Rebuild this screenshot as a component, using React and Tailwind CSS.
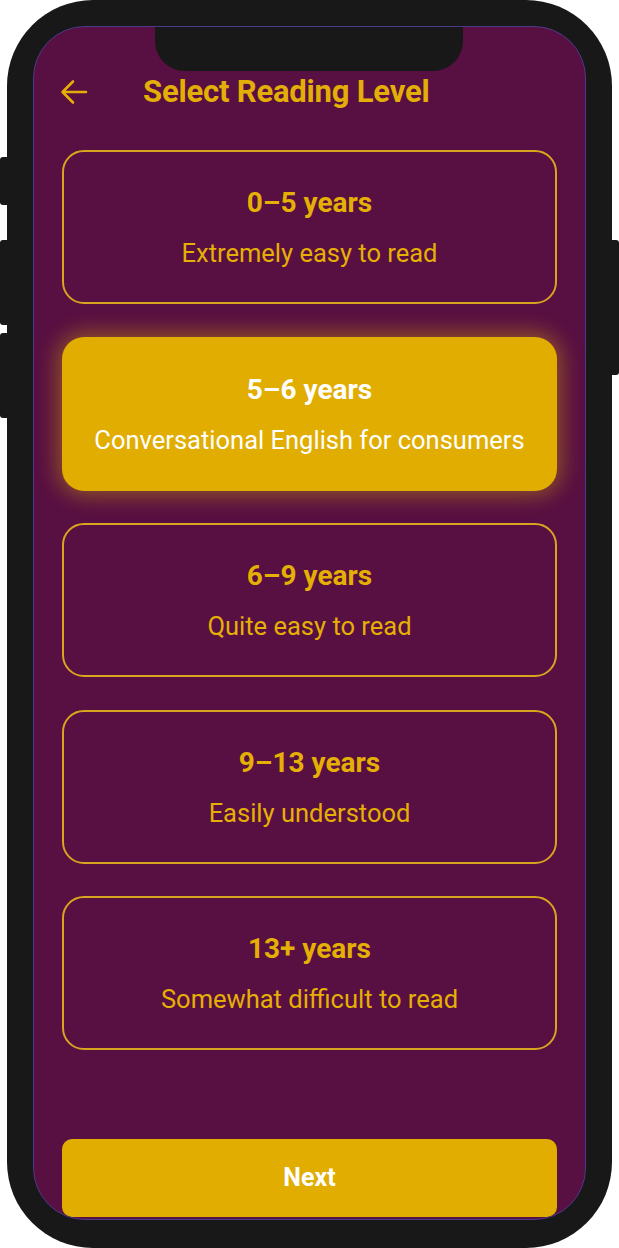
import React, { useState } from "react";

const levels = [
  { title: "0–5 years", desc: "Extremely easy to read" },
  { title: "5–6 years", desc: "Conversational English for consumers" },
  { title: "6–9 years", desc: "Quite easy to read" },
  { title: "9–13 years", desc: "Easily understood" },
  { title: "13+ years", desc: "Somewhat difficult to read" },
];

const BackArrow = () => (
  <svg width="28" height="26" viewBox="0 0 28 26" fill="none">
    <path
      d="M26 13H3M13 2.5 2.5 13 13 23.5"
      stroke="#e3ae06"
      strokeWidth="2.6"
      strokeLinecap="round"
      strokeLinejoin="round"
    />
  </svg>
);

const LevelCard = ({ level, selected, onClick }) => (
  <button
    onClick={onClick}
    className={
      selected
        ? "h-[154px] w-full shrink-0 rounded-[22px] bg-[#e1ad01] flex flex-col items-center justify-center gap-[18px] shadow-[0_0_22px_4px_rgba(225,173,1,0.45)]"
        : "h-[154px] w-full shrink-0 rounded-[22px] border-2 border-[#d9a41e] flex flex-col items-center justify-center gap-[18px]"
    }
  >
    <span
      className={
        selected
          ? "text-[28px] leading-[34px] font-bold text-white"
          : "text-[28px] leading-[34px] font-bold text-[#e5b004]"
      }
    >
      {level.title}
    </span>
    <span
      className={
        selected
          ? "text-[25.5px] leading-[30px] text-white"
          : "text-[25.5px] leading-[30px] text-[#e5b004]"
      }
    >
      {level.desc}
    </span>
  </button>
);

export default function App() {
  const [selected, setSelected] = useState(1);

  return (
    <div
      className="relative w-[619px] h-[1248px] bg-white"
      style={{ fontFamily: "Roboto, 'Liberation Sans', sans-serif" }}
    >
      {/* side buttons */}
      <div className="absolute left-0 top-[157px] w-[10px] h-[48px] bg-[#181818] rounded-l-[3px]" />
      <div className="absolute left-0 top-[240px] w-[10px] h-[85px] bg-[#181818] rounded-l-[3px]" />
      <div className="absolute left-0 top-[333px] w-[10px] h-[85px] bg-[#181818] rounded-l-[3px]" />
      <div className="absolute right-0 top-[240px] w-[10px] h-[135px] bg-[#181818] rounded-r-[3px]" />

      <div className="relative mx-[7px] h-full bg-[#181818] rounded-[86px] pt-[26px] pl-[26px] pr-[26px] pb-[28px]">
        <div className="relative h-full bg-[#580f42] rounded-[52px] overflow-hidden border border-[#4b3a8a] flex flex-col">
          {/* notch */}
          <div className="absolute left-[121px] top-[-1px] w-[308px] h-[45px] bg-[#181818] rounded-b-[30px]" />

          <div className="flex items-center h-[44px] mt-[43px] pl-[26px]">
            <BackArrow />
            <h1 className="ml-[55px] text-[31px] font-bold text-[#e3ae06] tracking-[-0.2px]">
              Select Reading Level
            </h1>
          </div>

          <div className="flex flex-col gap-[32.5px] px-[28px] mt-[36px]">
            {levels.map((level, i) => (
              <LevelCard
                key={level.title}
                level={level}
                selected={selected === i}
                onClick={() => setSelected(i)}
              />
            ))}
          </div>

          <div className="mt-auto px-[28px] pb-[2px]">
            <button className="w-full h-[78px] rounded-[10px] bg-[#e1ad01] text-white text-[25px] font-bold">
              Next
            </button>
          </div>
        </div>
      </div>
    </div>
  );
}
